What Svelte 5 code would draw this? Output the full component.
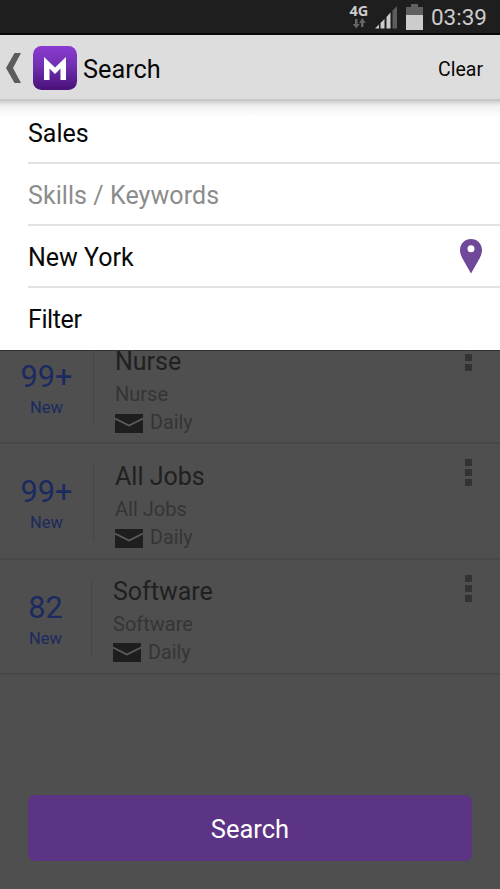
<script>
    const fields = [
        { text: "Sales" },
        { text: "Skills / Keywords", empty: true },
        { text: "New York", pin: true },
        { text: "Filter" }
    ];
    const searches = [
        { count: "99+", name: "Nurse" },
        { count: "99+", name: "All Jobs" },
        { count: "82", name: "Software", narrow: true }
    ];
</script>

<div class="screen">
    <div class="status">
        <div class="network">
            <span>4G</span>
            <svg width="14" height="11" viewBox="0 0 14 11">
                <path d="M3 1h2.500v5h2.200L4.300 10.500.8 6H3z" fill="#666" />
                <path d="M9 9h2.500V5h2.200L10.300 0 7 5h2z" fill="#666" />
            </svg>
        </div>
        <svg class="signal" width="23" height="23" viewBox="0 0 23 23">
            <path d="M0 22.500 4 18.500v4zM5.500 17l4-4v9.500h-4zM11.500 11l4-4.500v16h-4z" fill="#ccc" />
            <path d="M17.500 4.500 22 .3v22.200h-4.500z" fill="#5d5d5d" />
        </svg>
        <svg class="battery" width="17" height="26" viewBox="0 0 17 26">
            <path d="M5 0h7v3h5v8H0V3h5z" fill="#606060" />
            <path d="M0 11h17v15H0z" fill="#ccc" />
        </svg>
        <span class="clock">03:39</span>
    </div>

    <header>
        <svg class="back" width="16" height="30" viewBox="0 0 16 30">
            <path d="M8.500 0H15L7 15l8 15H8.500L0 15z" fill="#5c5c5c" />
        </svg>
        <svg class="logo" width="44" height="44" viewBox="0 0 44 44">
            <defs>
                <linearGradient id="purple" x1="0" y1="0" x2="0" y2="1">
                    <stop offset="0" stop-color="#8a3bd0" />
                    <stop offset=".45" stop-color="#7130b2" />
                    <stop offset="1" stop-color="#481078" />
                </linearGradient>
            </defs>
            <rect width="44" height="44" rx="8.500" fill="url(#purple)" />
            <path d="M11 11l11 10.500L33 11v23h-5.500V22.500L22 28l-5.500-5.500V34H11z" fill="#fff" />
        </svg>
        <h1>Search</h1>
        <span class="clear">Clear</span>
    </header>

    <div class="form">
        {#each fields as field}
        <div class="field" class:empty={field.empty}>
            <span>{field.text}</span>
            {#if field.pin}
            <svg width="22" height="35" viewBox="0 0 22 35">
                <path fill-rule="evenodd" d="M11 0C4.900 0 0 4.900 0 11c0 3 1 5.500 2.200 8L11 34.500 19.800 19c1.200-2.500 2.200-5 2.200-8C22 4.900 17.100 0 11 0zm0 6.200a3.500 3.500 0 1 1 0 7 3.500 3.500 0 0 1 0-7z" fill="#6f4899" />
            </svg>
            {/if}
        </div>
        {/each}
    </div>

    <div class="results">
        <div class="list">
            {#each searches as search}
            <div class="item" class:narrow={search.narrow}>
                <div class="count">
                    <p class="number">{search.count}</p>
                    <p class="new">New</p>
                </div>
                <div class="info">
                    <p class="name">{search.name}</p>
                    <p class="sub">{search.name}</p>
                    <div class="daily">
                        <svg width="28" height="19" viewBox="0 0 28 19">
                            <path d="M0 0h28v19H0z" fill="#1e1e1e" />
                            <path d="M0 4.500 14 11.500 28 4.500" fill="none" stroke="#5c5c5c" stroke-width="1.800" />
                        </svg>
                        <span>Daily</span>
                    </div>
                </div>
                <div class="menu"><i></i><i></i><i></i></div>
            </div>
            {/each}
        </div>
        <button>Search</button>
    </div>
</div>

<style>
    :global(body) {
        margin: 0;
    }
    .screen {
        display: flex;
        flex-flow: column;
        height: 889px;
        font-family: Roboto, sans-serif;
        font-size: 25px;
        color: #080808;
        background: #4f4f4f;
    }
    p, h1 {
        margin: 0;
        font-weight: 400;
    }
    svg {
        display: block;
        flex: none;
    }
    .status {
        display: flex;
        box-sizing: border-box;
        height: 35px;
        padding-right: 13px;
        justify-content: flex-end;
        background: #1e1e1e;
        border-bottom: 2px solid #080808;
    }
    .network {
        display: flex;
        flex-flow: column;
        align-items: center;
        width: 20px;
        padding-top: 4px;
        font: 700 14.500px/14px "Open Sans", sans-serif;
        color: #ccc;
    }
    .signal {
        margin: 6px 8px 0 6px;
    }
    .battery {
        margin-top: 4px;
    }
    .clock {
        margin-left: 8px;
        font-size: 22.500px;
        line-height: 35px;
        color: #ccc;
    }
    header {
        display: flex;
        box-sizing: border-box;
        height: 66px;
        padding: 2px 17px 0 6px;
        align-items: center;
        background: #ddd;
        border-bottom: 2px solid #c8c8c8;
    }
    .logo {
        margin: 0 6px 0 11px;
    }
    h1 {
        flex: 1;
        padding-top: 2px;
        font-size: 25.300px;
    }
    .clear {
        padding-top: 2px;
        font-size: 19.500px;
    }
    .form {
        flex: none;
        padding-top: 1px;
        background: linear-gradient(#d0d0d0, #f1f1f1 5px, #fff 16px);
    }
    .field {
        display: flex;
        box-sizing: border-box;
        height: 62px;
        margin-left: 28px;
        padding-right: 18px;
        justify-content: space-between;
        align-items: center;
        border-bottom: 2px solid #e2e2e2;
    }
    .field span {
        padding-top: 2px;
    }
    .field:last-child {
        border-bottom: 0;
        letter-spacing: -.4px;
    }
    .field:last-child span {
        padding-top: 0;
    }
    .empty {
        color: #8c8c8c;
        letter-spacing: .07px;
    }
    .results {
        display: flex;
        flex: 1;
        flex-flow: column;
        justify-content: space-between;
        min-height: 0;
        overflow: hidden;
        box-shadow: inset 0 1px #303030;
    }
    .list {
        margin-top: -21px;
    }
    .item {
        display: flex;
        box-sizing: border-box;
        height: 115.400px;
        border-bottom: 2px solid #484848;
    }
    .count {
        box-sizing: border-box;
        width: 94px;
        height: 77px;
        margin-top: 19px;
        padding-top: 11px;
        border-right: 1px solid #464646;
        color: #1b2a60;
        text-align: center;
    }
    .narrow .count {
        width: 92px;
    }
    .number {
        font-size: 30.700px;
        line-height: 36px;
    }
    .new {
        font-size: 16.500px;
        line-height: 26px;
    }
    .info {
        flex: 1;
        padding: 16px 0 0 21px;
        color: #353535;
    }
    .narrow .info {
        padding-top: 15px;
    }
    .name {
        line-height: 34px;
        color: #202020;
    }
    .sub {
        font-size: 20px;
        line-height: 30px;
    }
    .daily {
        display: flex;
        align-items: center;
        gap: 7px;
        font-size: 19.800px;
        line-height: 28px;
    }
    .menu {
        display: flex;
        flex-flow: column;
        gap: 3px;
        padding: 15px 28px 0 0;
    }
    .menu i {
        width: 7px;
        height: 7px;
        background: #323334;
    }
    button {
        height: 66px;
        margin: 0 28px 28px;
        padding-top: 2px;
        border: 0;
        border-radius: 7px;
        background: #5c3485;
        color: #fff;
        font: 25.500px Roboto, sans-serif;
    }
</style>
